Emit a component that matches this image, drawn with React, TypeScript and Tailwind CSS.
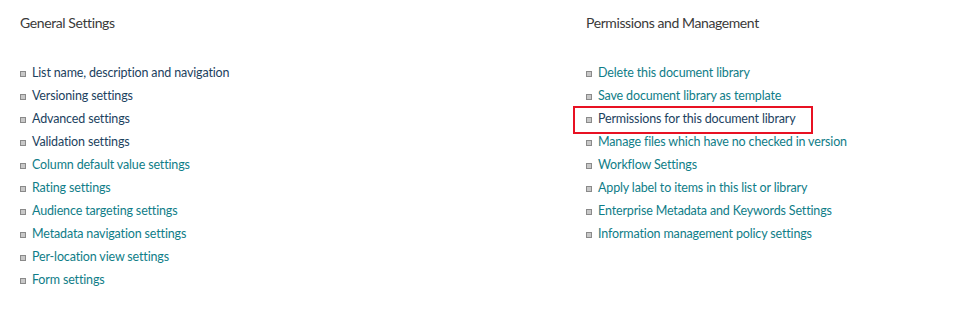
import type { ReactNode } from "react";

type Link = { label: string; visited?: boolean; highlight?: boolean };

const general: Link[] = [
  { label: "List name, description and navigation", visited: true },
  { label: "Versioning settings", visited: true },
  { label: "Advanced settings", visited: true },
  { label: "Validation settings", visited: true },
  { label: "Column default value settings" },
  { label: "Rating settings" },
  { label: "Audience targeting settings" },
  { label: "Metadata navigation settings" },
  { label: "Per-location view settings" },
  { label: "Form settings" },
];

const permissions: Link[] = [
  { label: "Delete this document library" },
  { label: "Save document library as template" },
  { label: "Permissions for this document library", visited: true, highlight: true },
  { label: "Manage files which have no checked in version" },
  { label: "Workflow Settings" },
  { label: "Apply label to items in this list or library" },
  { label: "Enterprise Metadata and Keywords Settings" },
  { label: "Information management policy settings" },
];

function Bullet() {
  return (
    <span className="inline-block h-[6px] w-[6px] shrink-0 border border-[#8a8a8a] bg-[#c8c8c8]" />
  );
}

function Section({ title, links, children }: { title: string; links: Link[]; children?: ReactNode }) {
  return (
    <div>
      <h2 className="h-[14px] text-[14px] leading-[14px] tracking-[-0.4px] text-[#3a3a3a]">{title}</h2>
      <ul className="mt-[32px]">
        {links.map((link) => (
          <li key={link.label} className="relative flex h-[23px] items-center gap-[6px]">
            <Bullet />
            <a
              href="#"
              className={
                link.visited
                  ? "text-[12.5px] tracking-[-0.15px] text-[#1c4260]"
                  : "text-[12.5px] tracking-[-0.15px] text-[#0f7d88]"
              }
            >
              {link.label}
            </a>
            {link.highlight && (
              <span className="pointer-events-none absolute -top-[2px] -bottom-[3px] -left-[13px] w-[240px] border-[2px] border-[#e81123]" />
            )}
          </li>
        ))}
      </ul>
      {children}
    </div>
  );
}

export default function App() {
  return (
    <div
      className="flex h-[318px] w-[968px] bg-white pt-[16px] pl-[20px]"
      style={{ fontFamily: "Lato, 'Open Sans', sans-serif" }}
    >
      <div className="w-[566px]">
        <Section title="General Settings" links={general} />
      </div>
      <div>
        <Section title="Permissions and Management" links={permissions} />
      </div>
    </div>
  );
}
